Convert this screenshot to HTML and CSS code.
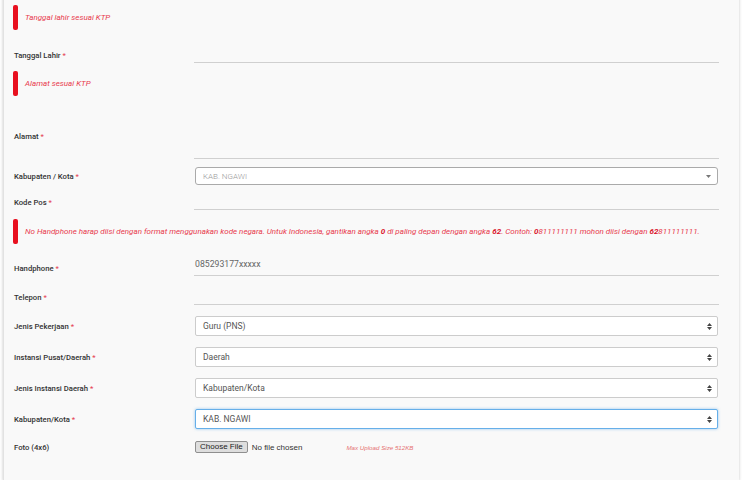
FILE: index.html
```html
<!DOCTYPE html>
<html lang="id">
<head>
<meta charset="utf-8">
<title>Form Biodata</title>
<link rel="stylesheet" href="styles.css">
</head>
<body>
<div class="card">
  <div class="alert"><span class="alert-text">Tanggal lahir sesuai KTP</span></div>

  <div class="field line mt-12">
    <label class="label">Tanggal Lahir <span class="req">*</span></label>
    <div class="input-line"></div>
  </div>

  <div class="alert mt-8"><span class="alert-text">Alamat sesuai KTP</span></div>

  <div class="field line mt-12">
    <label class="label">Alamat <span class="req">*</span></label>
    <div class="input-line tall"></div>
  </div>

  <div class="field mt-8">
    <label class="label">Kabupaten / Kota <span class="req">*</span></label>
    <div class="select2">
      <span class="select2-text">KAB. NGAWI</span>
      <svg class="caret" width="5" height="3" viewBox="0 0 5 3"><path d="M0 0H5L2.5 3Z" fill="#777"/></svg>
    </div>
  </div>

  <div class="field line mt-4">
    <label class="label">Kode Pos <span class="req">*</span></label>
    <div class="input-line"></div>
  </div>

  <div class="alert mt-9"><span class="alert-text">No Handphone harap diisi dengan format menggunakan kode negara. Untuk Indonesia, gantikan angka <b>0</b> di paling depan dengan angka <b>62</b>. Contoh: <b>0</b>811111111 mohon diisi dengan <b>62</b>811111111.</span></div>

  <div class="field line mt-11">
    <label class="label">Handphone <span class="req">*</span></label>
    <div class="input-line"><span class="value">085293177xxxxx</span></div>
  </div>

  <div class="field line mt-8">
    <label class="label">Telepon <span class="req">*</span></label>
    <div class="input-line"></div>
  </div>

  <div class="field mt-11">
    <label class="label">Jenis Pekerjaan <span class="req">*</span></label>
    <div class="select"><span>Guru (PNS)</span><svg class="updown" width="5" height="7" viewBox="0 0 5 7"><path d="M0 3H5L2.5 0Z M0 4H5L2.5 7Z" fill="#444"/></svg></div>
  </div>

  <div class="field mt-11">
    <label class="label">Instansi Pusat/Daerah <span class="req">*</span></label>
    <div class="select"><span>Daerah</span><svg class="updown" width="5" height="7" viewBox="0 0 5 7"><path d="M0 3H5L2.5 0Z M0 4H5L2.5 7Z" fill="#444"/></svg></div>
  </div>

  <div class="field mt-11">
    <label class="label">Jenis Instansi Daerah <span class="req">*</span></label>
    <div class="select"><span>Kabupaten/Kota</span><svg class="updown" width="5" height="7" viewBox="0 0 5 7"><path d="M0 3H5L2.5 0Z M0 4H5L2.5 7Z" fill="#444"/></svg></div>
  </div>

  <div class="field mt-11">
    <label class="label">Kabupaten/Kota <span class="req">*</span></label>
    <div class="select focus"><span>KAB. NGAWI</span><svg class="updown" width="5" height="7" viewBox="0 0 5 7"><path d="M0 3H5L2.5 0Z M0 4H5L2.5 7Z" fill="#444"/></svg></div>
  </div>

  <div class="field file mt-12">
    <label class="label">Foto (4x6)</label>
    <div class="file-box">
      <span class="file-btn">Choose File</span>
      <span class="file-name">No file chosen</span>
      <span class="file-note">Max Upload Size 512KB</span>
    </div>
  </div>
</div>
</body>
</html>
```

FILE: styles.css
```css
html, body {
  margin: 0;
  padding: 0;
  background: #ffffff;
  font-family: Roboto, "Noto Sans", sans-serif;
  overflow: hidden;
}

.card {
  margin: -6px 8px 0 3px;
  width: 736px;
  box-sizing: border-box;
  padding: 11px 21px 27px 10px;
  background: #f9f9f9;
  box-shadow: 0 1px 3px rgba(0, 0, 0, 0.22);
  border-left: 1px solid #e2e2e2;
}

.mt-4 { margin-top: 4px; }
.mt-8 { margin-top: 8px; }
.mt-9 { margin-top: 9px; }
.mt-11 { margin-top: 11px; }
.mt-12 { margin-top: 12px; }

.alert {
  display: flex;
  align-items: center;
  height: 25px;
  position: relative;
  padding-left: 11px;
}
.alert::before {
  content: "";
  position: absolute;
  left: -1px;
  top: 0;
  width: 5px;
  height: 25px;
  border-radius: 2px;
  background: #e8101f;
}
.alert-text {
  font-style: italic;
  font-size: 8px;
  color: #e8394d;
  white-space: nowrap;
}
.alert-text b {
  font-weight: 700;
  color: #d9132b;
}

.field {
  display: grid;
  grid-template-columns: 180px 525px;
  align-items: center;
}
.label {
  font-size: 7.7px;
  font-weight: 500;
  color: #333;
}
.field.line .label {
  padding-top: 5px;
}
.req {
  color: #e53950;
  font-weight: 400;
}

.input-line {
  height: 20px;
  border-bottom: 1px solid #d0d0d0;
  display: flex;
  align-items: center;
  padding-left: 1px;
}
.input-line.tall {
  height: 50px;
}
.value {
  font-size: 8.7px;
  font-weight: 400;
  color: #666;
  margin-top: -3px;
}

.select2 {
  height: 16px;
  margin-left: 1px;
  margin-right: 1px;
  border: 1px solid #aaa;
  border-radius: 3px;
  background: #fff;
  display: flex;
  align-items: center;
  justify-content: space-between;
  padding: 0 6px 0 7px;
}
.select2-text {
  font-size: 8px;
  font-weight: 300;
  color: #999;
}
.caret {
  display: block;
}

.select {
  height: 18px;
  margin-left: 1px;
  margin-right: 1px;
  border: 1px solid #ccc;
  border-radius: 2px;
  background: #fff;
  display: flex;
  align-items: center;
  justify-content: space-between;
  padding: 0 5px 0 7px;
  font-size: 8.5px;
  color: #555;
}
.select.focus {
  border-color: #66afe9;
  box-shadow: 0 0 3px rgba(102, 175, 233, 0.7);
}
.updown {
  display: block;
}

.file-box {
  display: flex;
  align-items: center;
  padding-left: 1px;
}
.file-btn {
  font-family: "Liberation Sans", Arial, sans-serif;
  font-size: 8px;
  color: #222;
  background: #dedede;
  border: 1px solid #8f8f8f;
  border-radius: 2px;
  padding: 1px 4px;
  line-height: 8px;
}
.file-name {
  font-family: "Liberation Sans", Arial, sans-serif;
  font-size: 8px;
  color: #333;
  margin-left: 4px;
}
.file-note {
  font-family: "Liberation Sans", Arial, sans-serif;
  font-style: italic;
  font-size: 6.2px;
  color: #e57373;
  margin-left: 44px;
}
```
